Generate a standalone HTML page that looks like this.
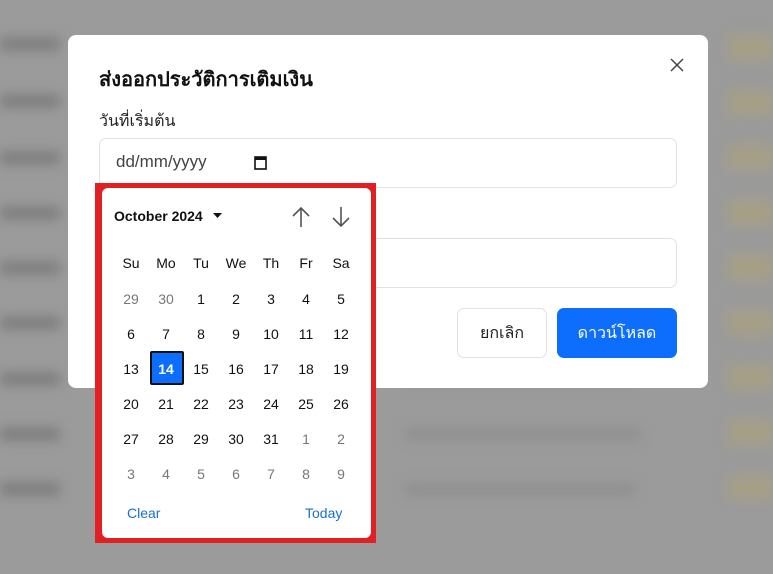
<!DOCTYPE html>
<html><head><meta charset="utf-8">
<style>
*{box-sizing:border-box;margin:0;padding:0}
body{width:773px;height:574px;overflow:hidden;background:#9b9b9b;font-family:"Liberation Sans","Noto Sans CJK SC",sans-serif;position:relative}
.bg{position:absolute;filter:blur(6px)}
.abs{position:absolute}
.modal{left:68px;top:35px;width:640px;height:353px;background:#fff;border-radius:8px}
.inp{position:absolute;left:99px;width:578px;height:50px;border:1px solid #e2e2e2;border-radius:7px;background:#fff}
.cal{left:95px;top:183px;width:281px;height:360px;border:5px solid #e21f23;background:#e21f23}
.cin{position:absolute;left:2px;top:0;right:0;bottom:0;background:#fff;border-radius:6px}
.d{position:absolute;width:34px;text-align:center;font-size:14px;color:#111;transform:translate(-50%,-50%)}
.g{color:#777}
</style></head><body>
<div class="bg" style="left:0;top:38px;width:60px;height:12px;background:#7a7a7a"></div>
<div class="bg" style="left:0;top:95px;width:60px;height:12px;background:#7a7a7a"></div>
<div class="bg" style="left:0;top:152px;width:60px;height:12px;background:#7a7a7a"></div>
<div class="bg" style="left:0;top:207px;width:60px;height:12px;background:#7a7a7a"></div>
<div class="bg" style="left:0;top:262px;width:60px;height:12px;background:#7a7a7a"></div>
<div class="bg" style="left:0;top:317px;width:60px;height:12px;background:#7a7a7a"></div>
<div class="bg" style="left:0;top:373px;width:60px;height:12px;background:#7a7a7a"></div>
<div class="bg" style="left:0;top:428px;width:60px;height:12px;background:#7a7a7a"></div>
<div class="bg" style="left:0;top:483px;width:60px;height:12px;background:#7a7a7a"></div>
<div class="bg" style="left:405px;top:374px;width:230px;height:10px;background:#8d8d8d"></div>
<div class="bg" style="left:405px;top:429px;width:235px;height:10px;background:#8d8d8d"></div>
<div class="bg" style="left:405px;top:484px;width:230px;height:10px;background:#8d8d8d"></div>
<div class="bg" style="left:728px;top:35px;width:45px;height:25px;background:#a69f86"></div>
<div class="bg" style="left:728px;top:90px;width:45px;height:25px;background:#a69f86"></div>
<div class="bg" style="left:728px;top:145px;width:45px;height:25px;background:#a69f86"></div>
<div class="bg" style="left:728px;top:200px;width:45px;height:25px;background:#a69f86"></div>
<div class="bg" style="left:728px;top:255px;width:45px;height:25px;background:#a69f86"></div>
<div class="bg" style="left:728px;top:310px;width:45px;height:25px;background:#a69f86"></div>
<div class="bg" style="left:728px;top:365px;width:45px;height:25px;background:#a69f86"></div>
<div class="bg" style="left:728px;top:420px;width:45px;height:25px;background:#a69f86"></div>
<div class="bg" style="left:728px;top:475px;width:45px;height:25px;background:#a69f86"></div>

<div class="abs modal"></div>
<div class="abs" style="left:99px;top:63px;font-size:20px;font-weight:bold;color:#111">ส่งออกประวัติการเติมเงิน</div>
<svg class="abs" style="left:670px;top:58px" width="14" height="14" viewBox="0 0 14 14"><path d="M1 1L13 13M13 1L1 13" stroke="#444" stroke-width="1.5"/></svg>
<div class="abs" style="left:99px;top:109px;font-size:16px;color:#222">วันที่เริ่มต้น</div>
<div class="inp" style="top:138px"></div>
<div class="abs" style="left:116px;top:152px;font-size:17px;color:#444">dd/mm/yyyy</div>
<svg class="abs" style="left:254px;top:155px" width="13" height="15" viewBox="0 0 13 15"><rect x="1" y="2" width="11" height="12" fill="none" stroke="#111" stroke-width="1.6"/><rect x="1" y="2" width="11" height="3" fill="#111"/></svg>
<div class="inp" style="top:238px"></div>
<div class="abs" style="left:457px;top:308px;width:90px;height:50px;border:1px solid #e2e2e2;border-radius:7px;background:#fff;font-size:16px;line-height:50px;text-align:center;color:#222">ยกเลิก</div>
<div class="abs" style="left:557px;top:308px;width:120px;height:50px;border-radius:7px;background:#0d6efd;font-size:16px;line-height:52px;text-align:center;color:#fff">ดาวน์โหลด</div>

<div class="abs cal"><div class="cin"></div></div>
<div class="abs" style="left:114px;top:208px;font-size:14px;font-weight:bold;color:#111">October 2024</div>
<svg class="abs" style="left:213px;top:213px" width="9" height="6"><path d="M0 0H9L4.5 5Z" fill="#111"/></svg>
<svg class="abs" style="left:291px;top:206px" width="20" height="22" viewBox="0 0 20 22"><path d="M10 21V2M2 10L10 2L18 10" stroke="#555" stroke-width="1.6" fill="none"/></svg>
<svg class="abs" style="left:331px;top:206px" width="20" height="22" viewBox="0 0 20 22"><path d="M10 1V20M2 12L10 20L18 12" stroke="#555" stroke-width="1.6" fill="none"/></svg>
<div class="abs" style="left:150px;top:351px;width:34px;height:34px;background:#0d6efd;border:2px solid #111;border-radius:2px"></div>
<div id="grid"></div>
<div class="abs" style="left:127px;top:505px;font-size:14px;color:#1a6fd0">Clear</div>
<div class="abs" style="left:305px;top:505px;font-size:14px;color:#1a6fd0">Today</div>
<script>
var h=['Su','Mo','Tu','We','Th','Fr','Sa'],s='';
var xs=[131,166,201,236,271,306,341];
h.forEach(function(t,i){s+='<div class="d" style="left:'+xs[i]+'px;top:263px">'+t+'</div>';});
var days=[29,30];for(var i=1;i<=31;i++)days.push(i);for(i=1;i<=9;i++)days.push(i);
days.forEach(function(d,k){var r=Math.floor(k/7),c=k%7;var g=(k<2||k>32);var sel=(k==15);
s+='<div class="d'+(g?' g':'')+'" style="left:'+xs[c]+'px;top:'+(299+r*35)+'px;'+(sel?'color:#fff;font-weight:bold;':'')+'">'+d+'</div>';});
document.getElementById('grid').innerHTML=s;
</script>
</body></html>
